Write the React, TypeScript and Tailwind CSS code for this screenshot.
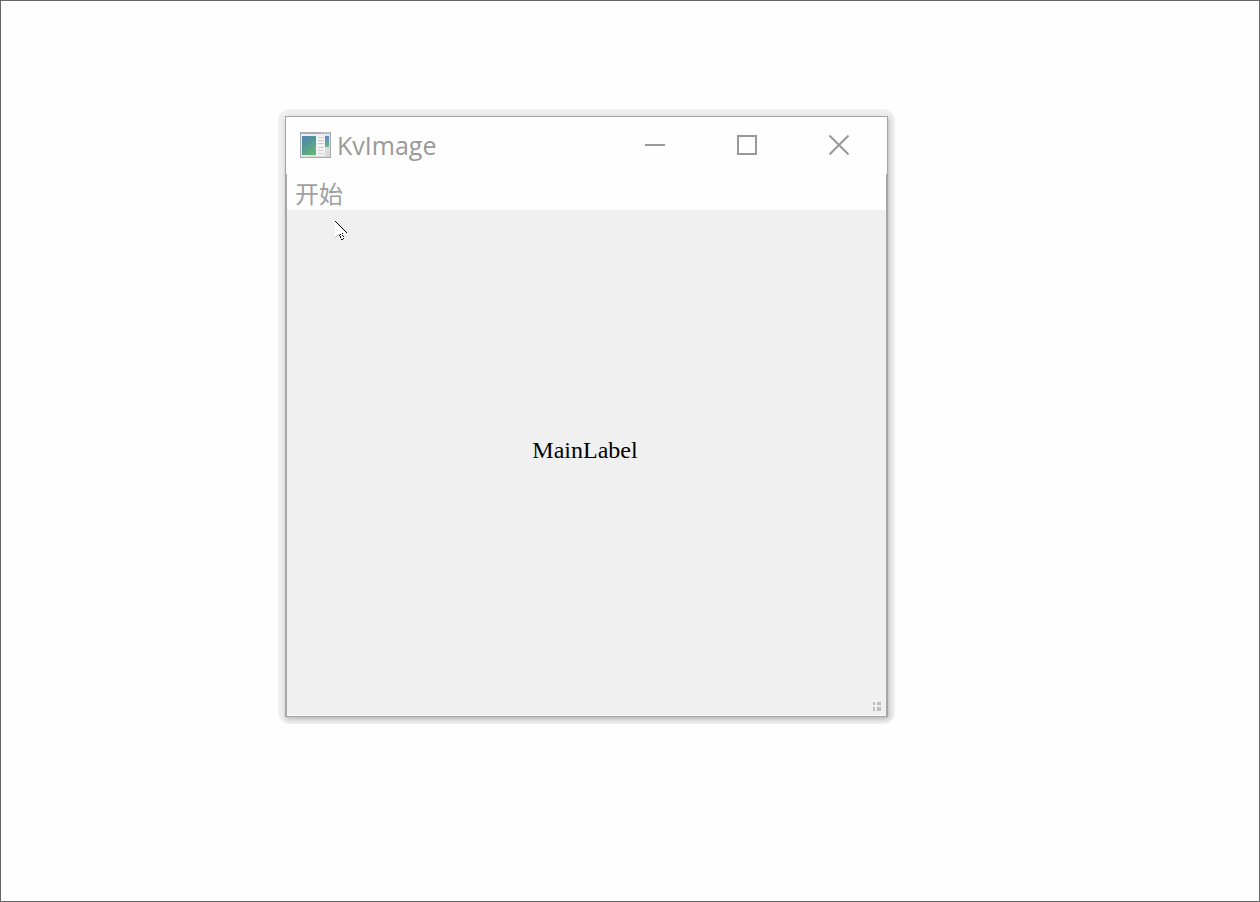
function AppIcon() {
  return (
    <svg width="32" height="29" viewBox="0 -2 32 29" aria-hidden="true">
      <defs>
        <linearGradient id="screen" x1="0" y1="0" x2="0.6" y2="1">
          <stop offset="0" stopColor="#5585b8" />
          <stop offset="0.5" stopColor="#529693" />
          <stop offset="1" stopColor="#62b47c" />
        </linearGradient>
        <linearGradient id="strip" x1="0" y1="0" x2="0" y2="1">
          <stop offset="0" stopColor="#5c86c4" />
          <stop offset="1" stopColor="#66b884" />
        </linearGradient>
        <linearGradient id="frame" x1="0" y1="0" x2="1" y2="1">
          <stop offset="0" stopColor="#f4f4f6" />
          <stop offset="1" stopColor="#d6d6da" />
        </linearGradient>
      </defs>
      <rect x="0.5" y="0.5" width="30" height="25" fill="url(#frame)" stroke="#a8aab0" />
      <rect x="0" y="0" width="31" height="2" fill="#a9abb5" />
      <path d="M21 1h2M24 1h2M27 1h2" stroke="#dfe1e8" />
      <rect x="2" y="4" width="14" height="19" fill="url(#screen)" />
      <path d="M2 17C8 15 13 11 16 7" stroke="#8fc6b8" strokeOpacity="0.25" fill="none" />
      <rect x="16" y="3" width="9" height="21" fill="#f3f3f4" />
      <path d="M18 5.5h6M18 8.5h6M18 11.5h6M18 15.5h6M18 18.5h5M18 21.5h6" stroke="#cdcdd1" />
      <rect x="25" y="4" width="4" height="11" fill="url(#strip)" />
    </svg>
  );
}

function Pointer() {
  return (
    <svg
      className="pointer-events-none absolute left-12 top-[11px]"
      width="14"
      height="20"
      viewBox="0 0 14 20"
      shapeRendering="crispEdges"
      aria-hidden="true"
    >
      <path d="M0 1L11 12H7L5 13L3 13L0 16Z" fill="#fff" />
      <path
        d="M0 0h1v1H0zM1 1h1v1H1zM2 2h1v1H2zM3 3h1v1H3zM4 4h1v1H4zM5 5h1v1H5zM6 6h1v1H6zM7 7h1v1H7zM8 8h1v1H8zM9 9h1v1H9zM10 10h1v1h-1zM11 11h1v1h-1z"
        fill="#000"
      />
      <path d="M5 13h2v2H5zM7 15h1v2H7z" fill="#fff" />
      <path d="M0 16h1v-1h1v-1h1v-1h2v1H3v1H2v1H1v1H0z" fill="#c4c4c4" />
      <path d="M7 12h1v1H7zM5 13h1v1H5zM4 14h1v1H4zM7 14h1v1H7zM5 15h1v1H5zM8 15h1v1H8zM5 16h1v1H5zM8 17h1v1H8zM6 18h2v1H6z" fill="#111" />
    </svg>
  );
}

export default function App() {
  return (
    <main className="relative min-h-screen overflow-hidden border border-[#666666] bg-[#fefefe] font-['Open_Sans','Noto_Sans_CJK_SC',sans-serif]">
      <div className="absolute left-[277px] top-[108px] rounded-xl bg-[#f0f0f0] p-[7px]">
        <section className="flex h-[601px] w-[603px] flex-col border border-[#a6a6a6] bg-[#fefefe] shadow-[1px_2px_5px_rgba(0,0,0,0.25)]">
          <header className="flex h-[57px] shrink-0 items-center pb-[2px] pl-[14px] pr-[2px]">
            <AppIcon />
            <h1 className="ml-[5px] flex-1 text-[25px] leading-8 text-[#999999]">KvImage</h1>
            <button aria-label="Minimize" className="flex h-full w-[92px] items-center justify-center">
              <svg width="20" height="20" viewBox="0 0 20 20">
                <path d="M0 10H20" stroke="#999" strokeWidth="2" />
              </svg>
            </button>
            <button aria-label="Maximize" className="flex h-full w-[92px] items-center justify-center">
              <svg width="20" height="20" viewBox="0 0 20 20">
                <rect x="1" y="1" width="18" height="18" fill="none" stroke="#999" strokeWidth="2" />
              </svg>
            </button>
            <button aria-label="Close" className="flex h-full w-[92px] items-center justify-center">
              <svg width="20" height="20" viewBox="0 0 20 20">
                <path d="M0.5 0.5L19.5 19.5M19.5 0.5L0.5 19.5" stroke="#999" strokeWidth="2" />
              </svg>
            </button>
          </header>
          <div className="flex min-h-0 flex-1 flex-col border-x border-[#a6a6a6]">
            <nav className="flex h-9 shrink-0 items-center px-2 pt-px">
              <button className="font-['Noto_Sans_CJK_SC',sans-serif] text-2xl leading-8 text-[#a0a0a0]">
                开始
              </button>
            </nav>
            <div className="relative flex flex-1 items-center justify-center border-b border-[#fefefe] bg-[#f0f0f0]">
              <p className="pb-[26px] pr-[3px] font-['Liberation_Serif',serif] text-2xl text-black">MainLabel</p>
              <Pointer />
              <svg
                className="absolute bottom-1 right-[5px]"
                width="8"
                height="9"
                viewBox="0 0 8 9"
                shapeRendering="crispEdges"
                aria-hidden="true"
              >
                <path d="M0 0h2v3H0zM4 0h4v3H4zM0 5h2v4H0zM4 5h4v4H4z" fill="#bfbfbf" />
              </svg>
            </div>
          </div>
        </section>
      </div>
    </main>
  );
}
